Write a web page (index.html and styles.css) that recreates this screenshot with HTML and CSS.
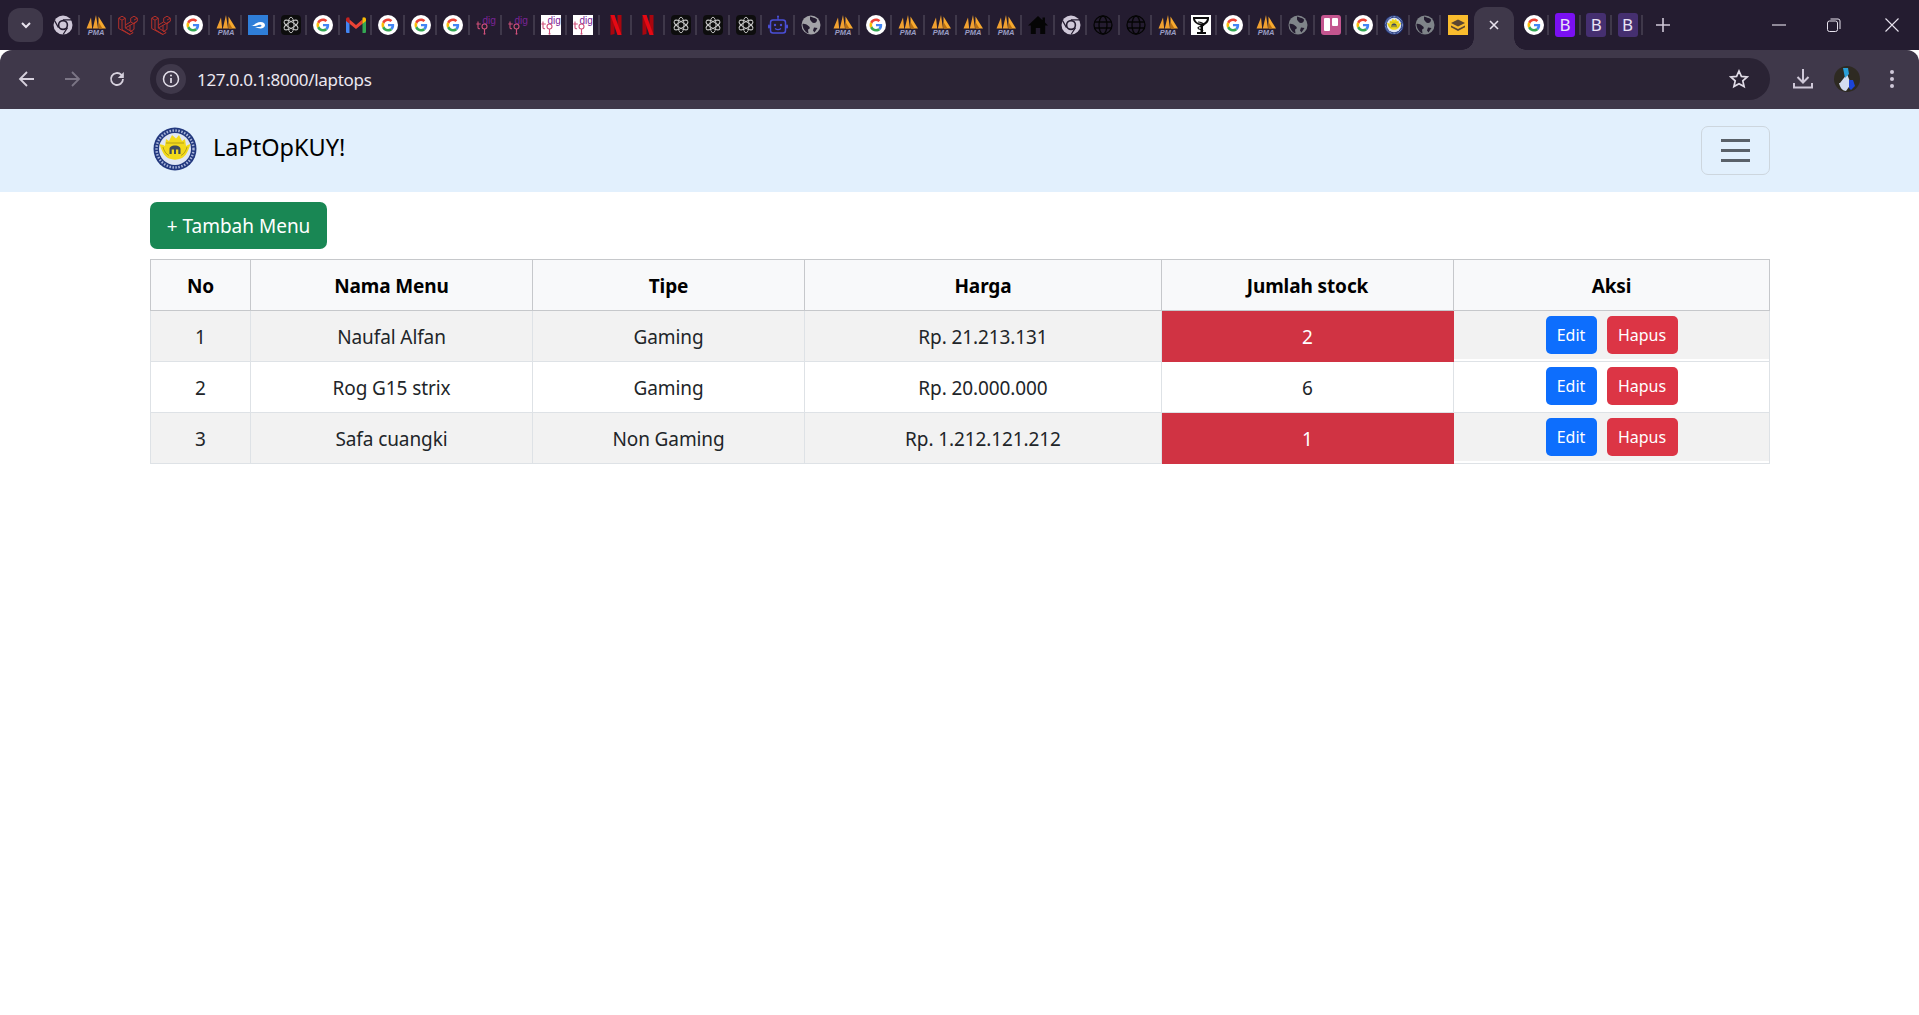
FILE: index.html
```html
<!DOCTYPE html>
<html lang="en">

<head>
    <meta charset="UTF-8">
    <meta name="viewport" content="width=device-width, initial-scale=1.0">
    <title>LaPtOpKUY!</title>
    <link rel="stylesheet" href="styles.css">
</head>

<body>

    <!-- favicon set, reused by the tab strip -->
    <svg class="sprites">
        <symbol id="g" viewBox="0 0 20 20">
            <circle cx="10" cy="10" r="10" fill="#fff"/>
            <g transform="translate(3.5 3.5) scale(.27)">
                <path fill="#EA4335" d="M24 9.5c3.54 0 6.71 1.22 9.21 3.6l6.85-6.85C35.9 2.38 30.47 0 24 0 14.62 0 6.51 5.38 2.56 13.22l7.98 6.19C12.43 13.72 17.74 9.5 24 9.5z"/>
                <path fill="#4285F4" d="M46.98 24.55c0-1.57-.15-3.09-.38-4.55H24v9.02h12.94c-.58 2.96-2.26 5.48-4.78 7.18l7.73 6c4.51-4.18 7.09-10.36 7.09-17.65z"/>
                <path fill="#FBBC05" d="M10.53 28.59c-.48-1.45-.76-2.99-.76-4.59s.27-3.14.76-4.59l-7.98-6.19C.92 16.46 0 20.12 0 24c0 3.88.92 7.54 2.56 10.78l7.97-6.19z"/>
                <path fill="#34A853" d="M24 48c6.48 0 11.93-2.13 15.89-5.81l-7.73-6c-2.15 1.45-4.92 2.3-8.16 2.3-6.26 0-11.57-4.22-13.47-9.91l-7.98 6.19C6.51 42.62 14.62 48 24 48z"/>
            </g>
        </symbol>
        <symbol id="chrome" viewBox="0 0 20 20">
            <circle cx="10" cy="10" r="9.5" fill="#cfc8d8"/>
            <circle cx="10" cy="10" r="5.2" fill="#241c30"/>
            <circle cx="10" cy="10" r="3.6" fill="#cfc8d8"/>
            <path d="M10 4.8h8.6M5.5 12.6 1.4 5.4M14.5 12.6l-4.4 6.9" stroke="#241c30" stroke-width="1.2" fill="none"/>
        </symbol>
        <symbol id="pma" viewBox="0 0 20 20">
            <path fill="#f0a030" d="M.5 13.500 5 2.500l1.200 11zM6.800 13.500 10 0l2 13.500z"/>
            <path fill="#f7a92e" d="M12.500 13.500V1.500l7.500 12z"/>
            <path fill="#b86f12" d="M12.500 7l4 6.500h-4z"/>
            <text x="10" y="19.800" text-anchor="middle" class="pma-text">PMA</text>
        </symbol>
        <symbol id="laravel" viewBox="0 0 20 20">
            <path fill="none" stroke="#b3302a" stroke-width="1" stroke-linejoin="round" d="M.7 3.200 4 1.200 7.300 3.200V13l4.700 2.700 3.200 1.900-3.300 1.900L.7 13.500zM7.300 13l4.700-2.700 7.300-4.200V3.200L16 1.200l-3.300 2V6.900L7.300 10M12.700 6.900 16 8.900l3.300-2.800M16 5.100l3.300-1.900M4 5.200.7 3.200M4 5.200 7.300 3.200M4 5.200V14.500L12 19.500M12 10.300v5.400M16 8.900v5.500L12 16.700"/>
        </symbol>
        <symbol id="blue" viewBox="0 0 20 20">
            <rect width="20" height="20" fill="#2f7ed8"/>
            <path fill="#fff" d="M3 10.500c3 .5 5-3.500 9.500-3.500 3 0 4.500 1.500 4.500 3.200S15 13.500 12.500 13.500c-2 0-3.500-1-5.500-1.500 2 0 3.500.3 5.500-.3 1-.3 1.300-1 .8-1.500-1-1-3-.3-4 .4-1 .7-3 .6-6.300-.1z"/>
        </symbol>
        <symbol id="openai" viewBox="0 0 20 20">
            <rect width="20" height="20" rx="4" fill="#0d0d0d"/>
            <g fill="none" stroke="#c9c9c9" stroke-width=".9">
                <ellipse cx="10" cy="10" rx="3" ry="7.800"/>
                <ellipse cx="10" cy="10" rx="3" ry="7.800" transform="rotate(60 10 10)"/>
                <ellipse cx="10" cy="10" rx="3" ry="7.800" transform="rotate(120 10 10)"/>
            </g>
        </symbol>
        <symbol id="gmail" viewBox="0 0 20 20">
            <path fill="#4285f4" d="M0 4.500h3.500V18H1.300C.6 18 0 17.400 0 16.700z"/>
            <path fill="#34a853" d="M16.500 4.500H20v12.200c0 .7-.6 1.300-1.300 1.300h-2.200z"/>
            <path fill="#ea4335" d="M3.500 4.500 10 10l6.500-5.500v4.200L10 14 3.500 8.700z"/>
            <path fill="#c5221f" d="M0 4.500C0 2.500 2 1.500 3.500 2.800V8.700L0 6z"/>
            <path fill="#fbbc04" d="M20 4.500c0-2-2-3-3.500-1.700V8.700L20 6z"/>
        </symbol>
        <symbol id="digi" viewBox="0 0 20 20">
            <text x="6.500" y="9" class="digi-text">digi</text>
            <path fill="none" stroke="#d0507a" stroke-width="1.100" d="M2 6.500v6c0 1 1 1.500 2 1M.3 9h4.500M8.500 14v4"/>
            <circle cx="8.500" cy="11.500" r="2.500" fill="none" stroke="#d0507a" stroke-width="1.100"/>
            <circle cx="8.500" cy="18.700" r="1" fill="#d0507a"/>
        </symbol>
        <symbol id="digiw" viewBox="0 0 20 20">
            <rect width="20" height="20" fill="#fff"/>
            <use href="#digi" width="20" height="20"/>
        </symbol>
        <symbol id="netflix" viewBox="0 0 20 20">
            <path fill="#a8060e" d="M4.500 0h4v19l-4 1zM11.500 0h4v20l-4-1z"/>
            <path fill="#e50914" d="M4.500 0h4l7 20h-4z"/>
        </symbol>
        <symbol id="bot" viewBox="0 0 20 20">
            <path stroke="#4a4fd8" stroke-width="1.200" d="M10 1v4"/>
            <circle cx="10" cy="1.500" r="1" fill="#4a4fd8"/>
            <rect x="2.500" y="5" width="15" height="13" rx="2.500" fill="none" stroke="#4a4fd8" stroke-width="1.500"/>
            <rect x="0" y="9.500" width="2" height="4" rx="1" fill="#4a4fd8"/>
            <rect x="18" y="9.500" width="2" height="4" rx="1" fill="#4a4fd8"/>
            <circle cx="7" cy="10" r="1.200" fill="#4a4fd8"/>
            <circle cx="13" cy="10" r="1.200" fill="#4a4fd8"/>
            <path d="M7 13.500c2 1.500 4 1.500 6 0" fill="none" stroke="#4a4fd8" stroke-width="1.100"/>
        </symbol>
        <symbol id="globe" viewBox="0 0 20 20">
            <circle cx="10" cy="10" r="9.500" fill="currentColor"/>
            <path fill="#241c30" d="M9 1.500c2 1 5 1 7 3 0 2-1 3.500-3 3.500S10 6 9 4.500zM1.500 9c2-.5 4 .5 6 2 2 1 1.500 3-.5 3.500l.5 4c-3-1-6-5-6-9.500zM13 12.500l3.500.5-3 4.500-1.500-2z"/>
        </symbol>
        <symbol id="home" viewBox="0 0 20 20">
            <path fill="#050505" d="M10 1 0 10.500h2.800V19h5v-6h4.400v6h5v-8.500H20l-3-2.900V2.500h-2.500v2.700z"/>
        </symbol>
        <symbol id="web" viewBox="0 0 20 20">
            <g fill="none" stroke="#050505" stroke-width="1.300">
                <circle cx="10" cy="10" r="9"/>
                <ellipse cx="10" cy="10" rx="4" ry="9"/>
                <path d="M1.500 7h17M1.500 13h17"/>
            </g>
        </symbol>
        <symbol id="bowl" viewBox="0 0 20 20">
            <rect width="20" height="20" fill="#fff"/>
            <path fill="#0a0a0a" d="M2 2h16v1.500c0 3.500-2.500 6-6 7V17h3v2H6v-2h3.500v-6.500C6 9.500 2 7 2 3.500z"/>
            <path fill="#fff" d="M4 4h12c-.5 2.500-3 4.500-6 4.500S4.500 6.500 4 4z"/>
            <path fill="none" stroke="#0a0a0a" stroke-width="1.200" d="M7 7c3 0 6 1.500 6 3s-6 1-6 3 5 1 5 3"/>
        </symbol>
        <symbol id="trello" viewBox="0 0 20 20">
            <rect width="20" height="20" rx="3" fill="#c4558f"/>
            <rect x="3" y="3" width="6" height="13" rx="1" fill="#fff"/>
            <rect x="11" y="3" width="6" height="8" rx="1" fill="#fff"/>
        </symbol>
        <symbol id="seal" viewBox="0 0 44 44">
            <circle cx="22" cy="22" r="21.500" fill="#23397f"/>
            <circle cx="22" cy="22" r="18.500" fill="none" stroke="#aab6da" stroke-width="2.400" stroke-dasharray="1.500 1.500"/>
            <circle cx="22" cy="22" r="16" fill="#dfe6f4"/>
            <path fill="#f2d91c" d="M6.500 17c2 6 4 12 9.500 14.500 4 1.500 8 1.500 12 0 5.500-2.500 7.500-8.500 9.500-14.500-1.500.500-3 1-4.500 2l-1-7-3 2-3-6-3 3.500L19 8l-3 6-3-2-1 7c-1.500-1-4-1.500-5.500-2z"/>
            <path fill="#3d4a5e" d="M16.500 22c0-2 2.500-3.500 5.500-3.500s5.500 1.500 5.500 3.500v5h-2.200v-4.500h-2.300V27h-2v-4.500h-2.300V27h-2.200z"/>
            <path fill="none" stroke="#8a7a10" stroke-width=".6" d="M10 20c1 4 3 7 6 8.500M34 20c-1 4-3 7-6 8.500M13 16h18"/>
        </symbol>
        <symbol id="layers" viewBox="0 0 20 20">
            <rect width="20" height="20" fill="#f9bc2d"/>
            <path fill="#5a4632" d="M10 4.500 17 8l-7 3.500L3 8z"/>
            <path fill="#5a4632" d="M3 10.500l7 3.500 7-3.500v1.800L10 16l-7-3.700z"/>
        </symbol>
    </svg>

    <!-- browser chrome -->
    <div class="tabstrip">
        <div class="tab-search">
            <svg width="14" height="14" viewBox="0 0 14 14"><path d="M3 5l4 4 4-4" fill="none" stroke="#e8e3ee" stroke-width="2"/></svg>
        </div>
        <div class="tab"><svg class="fav"><use href="#chrome"/></svg></div>
        <div class="tab"><svg class="fav"><use href="#pma"/></svg></div>
        <div class="tab"><svg class="fav"><use href="#laravel"/></svg></div>
        <div class="tab"><svg class="fav"><use href="#laravel"/></svg></div>
        <div class="tab"><svg class="fav"><use href="#g"/></svg></div>
        <div class="tab"><svg class="fav"><use href="#pma"/></svg></div>
        <div class="tab"><svg class="fav"><use href="#blue"/></svg></div>
        <div class="tab"><svg class="fav"><use href="#openai"/></svg></div>
        <div class="tab"><svg class="fav"><use href="#g"/></svg></div>
        <div class="tab"><svg class="fav"><use href="#gmail"/></svg></div>
        <div class="tab"><svg class="fav"><use href="#g"/></svg></div>
        <div class="tab"><svg class="fav"><use href="#g"/></svg></div>
        <div class="tab"><svg class="fav"><use href="#g"/></svg></div>
        <div class="tab"><svg class="fav"><use href="#digi"/></svg></div>
        <div class="tab"><svg class="fav"><use href="#digi"/></svg></div>
        <div class="tab"><svg class="fav"><use href="#digiw"/></svg></div>
        <div class="tab"><svg class="fav"><use href="#digiw"/></svg></div>
        <div class="tab"><svg class="fav"><use href="#netflix"/></svg></div>
        <div class="tab"><svg class="fav"><use href="#netflix"/></svg></div>
        <div class="tab"><svg class="fav"><use href="#openai"/></svg></div>
        <div class="tab"><svg class="fav"><use href="#openai"/></svg></div>
        <div class="tab"><svg class="fav"><use href="#openai"/></svg></div>
        <div class="tab"><svg class="fav"><use href="#bot"/></svg></div>
        <div class="tab"><svg class="fav globe-light"><use href="#globe"/></svg></div>
        <div class="tab"><svg class="fav"><use href="#pma"/></svg></div>
        <div class="tab"><svg class="fav"><use href="#g"/></svg></div>
        <div class="tab"><svg class="fav"><use href="#pma"/></svg></div>
        <div class="tab"><svg class="fav"><use href="#pma"/></svg></div>
        <div class="tab"><svg class="fav"><use href="#pma"/></svg></div>
        <div class="tab"><svg class="fav"><use href="#pma"/></svg></div>
        <div class="tab"><svg class="fav"><use href="#home"/></svg></div>
        <div class="tab"><svg class="fav"><use href="#chrome"/></svg></div>
        <div class="tab"><svg class="fav"><use href="#web"/></svg></div>
        <div class="tab"><svg class="fav"><use href="#web"/></svg></div>
        <div class="tab"><svg class="fav"><use href="#pma"/></svg></div>
        <div class="tab"><svg class="fav"><use href="#bowl"/></svg></div>
        <div class="tab"><svg class="fav"><use href="#g"/></svg></div>
        <div class="tab"><svg class="fav"><use href="#pma"/></svg></div>
        <div class="tab"><svg class="fav globe-dark"><use href="#globe"/></svg></div>
        <div class="tab"><svg class="fav"><use href="#trello"/></svg></div>
        <div class="tab tab-narrow"><svg class="fav"><use href="#g"/></svg></div>
        <div class="tab tab-narrow"><svg class="fav"><use href="#seal"/></svg></div>
        <div class="tab tab-narrow"><svg class="fav globe-dark"><use href="#globe"/></svg></div>
        <div class="tab tab-narrow tab-last"><svg class="fav"><use href="#layers"/></svg></div>

        <div class="tab-active">
            <svg width="12" height="12" viewBox="0 0 12 12"><path d="M2 2l8 8M10 2l-8 8" stroke="#e8e3ee" stroke-width="1.600"/></svg>
        </div>

        <div class="tab tab-narrow tab-after"><svg class="fav"><use href="#g"/></svg></div>
        <div class="tab tab-narrow"><span class="fav-b fav-b-bright">B</span></div>
        <div class="tab tab-narrow"><span class="fav-b">B</span></div>
        <div class="tab tab-narrow"><span class="fav-b">B</span></div>

        <div class="new-tab">
            <svg width="14" height="14" viewBox="0 0 14 14"><path d="M7 0v14M0 7h14" stroke="#cfc8d8" stroke-width="1.600"/></svg>
        </div>

        <div class="window-controls">
            <svg width="14" height="14" viewBox="0 0 14 14"><path d="M0 7h14" stroke="#e8e3ee" stroke-width="1.100"/></svg>
            <svg width="14" height="14" viewBox="0 0 14 14"><rect x=".5" y="3" width="10" height="10.500" rx="2" fill="none" stroke="#e8e3ee"/><path d="M3.500 1h7.500a2 2 0 0 1 2 2v8" fill="none" stroke="#e8e3ee"/></svg>
            <svg class="win-close" width="14" height="14" viewBox="0 0 14 14"><path d="M.5.500l13 13M13.500.500l-13 13" stroke="#e8e3ee" stroke-width="1.100"/></svg>
        </div>
    </div>

    <div class="toolbar">
        <div class="nav-buttons">
            <svg width="18" height="18" viewBox="0 0 18 18"><path d="M16 9H2.500M9 2 2 9l7 7" fill="none" stroke="#d6d1dd" stroke-width="1.800"/></svg>
            <svg width="18" height="18" viewBox="0 0 18 18"><path d="M2 9h13.500M9 2l7 7-7 7" fill="none" stroke="#7b7585" stroke-width="1.800"/></svg>
            <svg width="18" height="18" viewBox="0 0 18 18"><path d="M15 9a6 6 0 1 1-1.800-4.300L15 6.500" fill="none" stroke="#d6d1dd" stroke-width="1.800"/><path d="M15.800 2v6h-6z" fill="#d6d1dd"/></svg>
        </div>
        <div class="omnibox">
            <div class="site-info">
                <svg width="18" height="18" viewBox="0 0 18 18"><circle cx="9" cy="9" r="7.500" fill="none" stroke="#e4e0ea" stroke-width="1.500"/><path d="M9 8v5" stroke="#e4e0ea" stroke-width="1.700"/><circle cx="9" cy="5.500" r="1" fill="#e4e0ea"/></svg>
            </div>
            <span class="url">127.0.0.1:8000/laptops</span>
            <svg class="star" width="20" height="20" viewBox="0 0 20 20"><path d="M10 2l2.400 5.400 5.800.6-4.400 3.900 1.300 5.700L10 14.700l-5.100 2.900 1.300-5.700L1.800 8l5.800-.6z" fill="none" stroke="#e0dbe6" stroke-width="1.700"/></svg>
        </div>
        <div class="toolbar-actions">
            <svg width="22" height="22" viewBox="0 0 22 22"><path d="M11 1v13M5.500 9l5.500 5.500L16.500 9" fill="none" stroke="#cfc8d8" stroke-width="2"/><path d="M2 15v4.500h18V15" fill="none" stroke="#cfc8d8" stroke-width="2"/></svg>
            <svg width="26" height="26" viewBox="0 0 26 26"><circle cx="13" cy="13" r="13" fill="#2e2a22"/><path d="M6 17 13 8l4 10-5 7c-3 0-6-3-7-8z" fill="#d4dcf0"/><path d="M9 2h5l1 6-4 4-1-5z" fill="#2a9fd8"/><path d="M15 14h4l2 6-4 4-2-2z" fill="#1b44d8"/></svg>
            <svg class="menu-dots" width="6" height="20" viewBox="0 0 6 20"><circle cx="3" cy="3" r="2" fill="#cfc8d8"/><circle cx="3" cy="10" r="2" fill="#cfc8d8"/><circle cx="3" cy="17" r="2" fill="#cfc8d8"/></svg>
        </div>
    </div>

    <!-- page -->
    <nav class="navbar">
        <a class="brand" href="#">
            <svg class="brand-logo"><use href="#seal"/></svg>
            <span class="brand-name">LaPtOpKUY!</span>
        </a>
        <button class="toggler" type="button" aria-label="Menu">
            <span class="toggler-line"></span>
            <span class="toggler-line"></span>
            <span class="toggler-line"></span>
        </button>
    </nav>

    <main class="content">
        <a class="btn btn-add" href="#">+ Tambah Menu</a>

        <table class="menu-table">
            <colgroup>
                <col class="col-no">
                <col class="col-nama">
                <col class="col-tipe">
                <col class="col-harga">
                <col class="col-stock">
                <col class="col-aksi">
            </colgroup>
            <thead>
                <tr>
                    <th>No</th>
                    <th>Nama Menu</th>
                    <th>Tipe</th>
                    <th>Harga</th>
                    <th>Jumlah stock</th>
                    <th>Aksi</th>
                </tr>
            </thead>
            <tbody>
                <tr class="striped">
                    <td>1</td>
                    <td>Naufal Alfan</td>
                    <td>Gaming</td>
                    <td>Rp. 21.213.131</td>
                    <td class="low-stock">2</td>
                    <td class="cell-aksi"><div class="aksi"><a class="btn btn-sm btn-edit" href="#">Edit</a><a class="btn btn-sm btn-hapus" href="#">Hapus</a></div></td>
                </tr>
                <tr>
                    <td>2</td>
                    <td>Rog G15 strix</td>
                    <td>Gaming</td>
                    <td>Rp. 20.000.000</td>
                    <td>6</td>
                    <td class="cell-aksi"><div class="aksi"><a class="btn btn-sm btn-edit" href="#">Edit</a><a class="btn btn-sm btn-hapus" href="#">Hapus</a></div></td>
                </tr>
                <tr class="striped">
                    <td>3</td>
                    <td>Safa cuangki</td>
                    <td>Non Gaming</td>
                    <td>Rp. 1.212.121.212</td>
                    <td class="low-stock">1</td>
                    <td class="cell-aksi"><div class="aksi"><a class="btn btn-sm btn-edit" href="#">Edit</a><a class="btn btn-sm btn-hapus" href="#">Hapus</a></div></td>
                </tr>
            </tbody>
        </table>
    </main>

</body>

</html>
```

FILE: styles.css
```css
* {
    box-sizing: border-box;
}

body {
    margin: 0;
    background-color: #fff;
    color: #212529;
    font-family: 'Noto Sans', 'Open Sans', sans-serif;
    font-size: 19px;
    overflow: hidden;
}

.sprites {
    display: none;
}

/* tab strip */
.tabstrip {
    display: flex;
    align-items: center;
    height: 50px;
    padding-left: 8px;
    background-color: #241c30;
}

.tab-search {
    display: flex;
    align-items: center;
    justify-content: center;
    width: 35px;
    height: 34px;
    margin-right: 4px;
    border-radius: 12px;
    background-color: #3f384a;
}

.tab {
    display: flex;
    align-items: center;
    justify-content: center;
    flex: none;
    width: 32.5px;
    height: 20px;
    border-right: 2px solid #3f384a;
}

.tab-narrow {
    width: 31.3px;
}

.tab-last {
    border-right: 0;
}

.tab-after {
    margin-left: 4px;
}

.fav {
    width: 20px;
    height: 20px;
    margin-left: 2px;
    flex: none;
}

.globe-light {
    color: #a3a3a8;
}

.globe-dark {
    color: #7f8489;
}

.fav-b {
    display: block;
    width: 20px;
    height: 24px;
    margin-left: 2px;
    border-radius: 3px;
    background-color: #452f70;
    color: #e9e3f5;
    font-size: 17px;
    line-height: 24px;
    text-align: center;
}

.fav-b-bright {
    background-color: #7a10f2;
}

.pma-text {
    fill: #9a9dc4;
    font-family: 'Liberation Sans', sans-serif;
    font-size: 7.5px;
    font-weight: bold;
    font-style: italic;
}

.digi-text {
    fill: #7b2396;
    font-family: 'Liberation Sans', sans-serif;
    font-size: 10px;
}

.tab-active {
    position: relative;
    display: flex;
    align-items: center;
    justify-content: center;
    flex: none;
    align-self: flex-end;
    width: 40px;
    height: 43px;
    margin-left: 1.8px;
    padding-bottom: 7px;
    border-radius: 12px 12px 0 0;
    background-color: #3f384a;
}

.tab-active::before,
.tab-active::after {
    content: "";
    position: absolute;
    bottom: 0;
    width: 12px;
    height: 12px;
}

.tab-active::before {
    left: -12px;
    background: radial-gradient(circle at 0 0, #241c30 11.5px, #3f384a 12px);
}

.tab-active::after {
    right: -12px;
    background: radial-gradient(circle at 100% 0, #241c30 11.5px, #3f384a 12px);
}

.new-tab {
    display: flex;
    margin-left: 13px;
}

.window-controls {
    display: flex;
    gap: 41px;
    margin-left: auto;
    margin-right: 20px;
}

.win-close {
    margin-left: 3px;
}

/* toolbar */
.toolbar {
    display: flex;
    align-items: center;
    height: 59px;
    padding-bottom: 1px;
    border-radius: 12px 12px 0 0;
    background-color: #3f384a;
}

.nav-buttons {
    display: flex;
    gap: 27px;
    width: 150px;
    padding-left: 18px;
}

.omnibox {
    display: flex;
    align-items: center;
    flex: none;
    width: 1620px;
    height: 42px;
    padding: 0 21px 0 6px;
    border-radius: 21px;
    background-color: #2a2334;
}

.site-info {
    display: flex;
    align-items: center;
    justify-content: center;
    width: 30px;
    height: 30px;
    border-radius: 50%;
    background-color: #3f384a;
}

.url {
    margin-left: 11px;
    color: #ece8f0;
    font-size: 17px;
    letter-spacing: -.3px;
}

.star {
    margin-left: auto;
}

.toolbar-actions {
    display: flex;
    align-items: center;
    gap: 20px;
    margin-left: 22px;
}

.menu-dots {
    margin-left: 9px;
}

/* navbar */
.navbar {
    display: flex;
    align-items: center;
    justify-content: space-between;
    height: 83px;
    padding: 0 149px 0 153px;
    background-color: #e2f0fd;
}

.brand {
    display: flex;
    align-items: center;
    gap: 16px;
    margin-top: -3px;
    color: #000;
    font-size: 23.5px;
    text-decoration: none;
}

.brand-logo {
    width: 44px;
    height: 44px;
}

.brand-name {
    margin-bottom: 5px;
}

.toggler {
    display: flex;
    flex-direction: column;
    align-items: center;
    gap: 7.5px;
    width: 69px;
    height: 49px;
    padding: 12px 0 0;
    border: 1px solid #cdd6de;
    border-radius: 7px;
    background: none;
}

.toggler-line {
    display: block;
    width: 29px;
    height: 2.5px;
    background-color: #5a6169;
}

/* page content */
.content {
    padding: 10px 149px 0 150px;
}

.btn {
    display: inline-block;
    border-radius: 7px;
    color: #fff;
    text-align: center;
    text-decoration: none;
}

.btn-add {
    display: block;
    width: 177px;
    height: 47px;
    background-color: #198754;
    font-size: 19px;
    line-height: 49px;
}

.menu-table {
    width: 1619px;
    margin-top: 10px;
    border-collapse: collapse;
    table-layout: fixed;
    font-size: 19px;
    letter-spacing: -.1px;
}

.col-no { width: 100px; }
.col-nama { width: 282px; }
.col-tipe { width: 272px; }
.col-harga { width: 357px; }
.col-stock { width: 292px; }
.col-aksi { width: 316px; }

.menu-table th,
.menu-table td {
    height: 51px;
    padding: 2px 0 0;
    border: 1px solid #dee2e6;
    text-align: center;
    vertical-align: middle;
}

.menu-table th {
    border-color: #c6c8cb;
    background-color: #f8f9fa;
    color: #000;
    font-weight: 700;
}

.striped td {
    background-color: #f2f2f2;
}

.menu-table td.low-stock {
    border-color: #d03343;
    background-color: #d03343;
    color: #fff;
}

.menu-table td.cell-aksi {
    padding: 0;
    background-color: #fff;
    vertical-align: top;
}

.aksi {
    display: flex;
    justify-content: center;
    gap: 10px;
    height: 48px;
    padding-top: 5px;
}

.striped .aksi {
    background-color: #f2f2f2;
}

.btn-sm {
    height: 38px;
    border-radius: 5px;
    font-size: 16px;
    line-height: 39px;
    letter-spacing: 0;
}

.btn-edit {
    width: 51px;
    background-color: #0d6efd;
}

.btn-hapus {
    width: 71px;
    background-color: #dc3545;
}
```
